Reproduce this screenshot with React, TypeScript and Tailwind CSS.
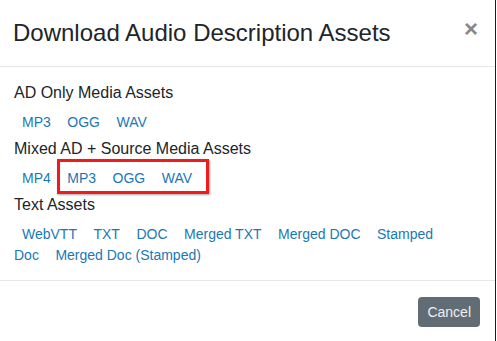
import React from "react";

const SECTIONS = [
  { title: "AD Only Media Assets", links: ["MP3", "OGG", "WAV"] },
  { title: "Mixed AD + Source Media Assets", links: ["MP4", "MP3", "OGG", "WAV"] },
  {
    title: "Text Assets",
    links: ["WebVTT", "TXT", "DOC", "Merged TXT", "Merged DOC", "Stamped Doc", "Merged Doc (Stamped)"],
  },
];

function LinkRow({ links }: { links: string[] }) {
  return (
    <p className="text-[14px] leading-[21px] pr-[24px]">
      {links.map((l, i) => (
        <React.Fragment key={l + i}>
          <a href="#" className="ml-2 pr-[4.6px] text-[#1a78b4] no-underline">
            {l}
          </a>{" "}
        </React.Fragment>
      ))}
    </p>
  );
}

export default function App() {
  return (
    <div className="relative w-[496px] h-[341px] bg-white border-r border-[#1c1c1c] font-['Liberation_Sans',Arial,sans-serif] text-[#212529]">
      <div className="flex items-start justify-between h-[67px] pl-[13px] pr-[17px] pt-[17px] border-b border-[#e5e7ea]">
        <h5 className="text-[24px] leading-[32px]">Download Audio Description Assets</h5>
        <button className="mt-[-4px] text-[24px] font-bold leading-[32px] text-[#888]">×</button>
      </div>

      <div className="h-[213px] px-[14px] pt-[14px]">
        {SECTIONS.map((s, i) => (
          <div key={s.title} className={i === 0 ? "" : "mt-[4px]"}>
            <h6 className="text-[16px] leading-[24px]">{s.title}</h6>
            <div className="mt-[7px]">
              <LinkRow links={s.links} />
            </div>
          </div>
        ))}
      </div>

      <div className="flex justify-end pt-[16px] pr-[15px] border-t border-[#e5e7ea]">
        <button className="h-[30px] px-[9px] rounded-[4px] bg-[#626c74] text-[#eef0f1] text-[14px] leading-[30px]">
          Cancel
        </button>
      </div>

      {/* red highlight annotation */}
      <div className="absolute left-[57px] top-[159px] w-[152px] h-[35px] border-[3px] border-[#ee1c1c] shadow-[1px_1px_2px_rgba(0,0,0,0.35)]" />
    </div>
  );
}
